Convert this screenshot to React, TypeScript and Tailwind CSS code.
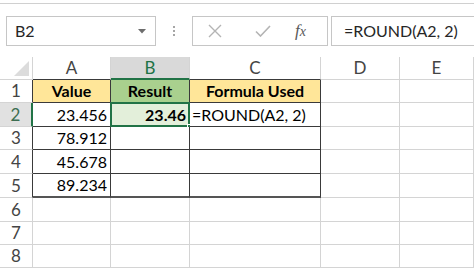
import React from "react";

const COLS = ["A", "B", "C", "D", "E"];
const ROW_H = [23, 23, 24, 23, 24, 24, 24, 23, 23];

type Cell = {
  text?: string;
  align?: "left" | "right" | "center";
  bold?: boolean;
  bg?: string;
  table?: boolean;
};

const data: Record<number, Cell[]> = {
  1: [
    { text: "Value", align: "center", bold: true, bg: "bg-[#ffe699]", table: true },
    { text: "Result", align: "center", bold: true, bg: "bg-[#a9d08e]", table: true },
    { text: "Formula Used", align: "center", bold: true, bg: "bg-[#ffe699]", table: true },
  ],
  2: [
    { text: "23.456", align: "right", table: true },
    { text: "23.46", align: "right", bold: true, bg: "bg-[#e3efda]", table: true },
    { text: "=ROUND(A2, 2)", align: "left", table: true },
  ],
  3: [{ text: "78.912", align: "right", table: true }, { table: true }, { table: true }],
  4: [{ text: "45.678", align: "right", table: true }, { table: true }, { table: true }],
  5: [{ text: "89.234", align: "right", table: true }, { table: true }, { table: true }],
};

function FormulaBar() {
  return (
    <div className="flex h-[30px] items-stretch mt-[12px] text-[#262626]">
      <div className="ml-[6px] flex w-[150px] items-center justify-between border border-[#c6c6c6] bg-white pl-[8px] pr-[9px]">
        <span className="text-[16px]">B2</span>
        <svg width="8" height="5" viewBox="0 0 8 5">
          <path d="M0 0 L8 0 L4 4.5 Z" fill="#6d6d6d" />
        </svg>
      </div>
      <div className="flex w-[36px] flex-col items-center justify-center gap-[2px]">
        <span className="h-[2px] w-[2px] bg-[#a6a6a6]" />
        <span className="h-[2px] w-[2px] bg-[#a6a6a6]" />
        <span className="h-[2px] w-[2px] bg-[#a6a6a6]" />
      </div>
      <div className="flex w-[136px] items-center border border-[#c6c6c6] bg-white">
        <svg className="ml-[15px]" width="14" height="14" viewBox="0 0 14 14">
          <path d="M1 1 L13 13 M13 1 L1 13" stroke="#b4b4b4" strokeWidth="1.4" fill="none" />
        </svg>
        <svg className="ml-[33px]" width="16" height="12" viewBox="0 0 16 12">
          <path d="M1 6.5 L5.5 11 L15 1" stroke="#b4b4b4" strokeWidth="1.6" fill="none" />
        </svg>
        <span className="ml-[24px] font-['Liberation_Serif',serif] text-[17px] italic text-[#595959]">
          f<span className="text-[14px]">x</span>
        </span>
      </div>
      <div className="ml-[3px] flex flex-1 items-center border border-r-0 border-[#c6c6c6] bg-white pl-[12px]">
        <span className="text-[16px]">=ROUND(A2, 2)</span>
      </div>
    </div>
  );
}

function Sheet() {
  return (
    <div
      className="mt-[11px] grid grid-cols-[33px_78px_79px_131px_79px_1fr]"
      style={{ gridTemplateRows: ROW_H.map((h) => `${h}px`).join(" ") }}
    >
      {/* corner */}
      <div className="relative border-r border-b border-[#d4d4d4] bg-white">
        <svg className="absolute right-[3px] bottom-[3px]" width="15" height="15" viewBox="0 0 15 15">
          <path d="M15 0 L15 15 L0 15 Z" fill="#dcdcdc" />
        </svg>
      </div>
      {COLS.map((c) => {
        const sel = c === "B";
        const tableTop = c === "A" || c === "B" || c === "C";
        return (
          <div
            key={c}
            className={`flex items-center justify-center text-[17px] border-r border-[#d4d4d4] ${
              sel
                ? "bg-[#d9d9d9] text-[#217346] border-b-2 border-b-[#217346]"
                : tableTop
                ? "bg-white text-[#444] border-b border-b-[#3a3a3a]"
                : "bg-white text-[#444] border-b"
            }`}
          >
            {c}
          </div>
        );
      })}
      {[1, 2, 3, 4, 5, 6, 7, 8].map((r) => {
        const row = data[r] || [];
        const active = r === 2;
        return (
          <React.Fragment key={r}>
            <div
              className={`flex items-center justify-center text-[17px] border-b border-[#d4d4d4] ${
                active
                  ? "bg-[#e1e1e1] text-[#3c6e52] border-r-2 border-r-[#217346]"
                  : r <= 5
                  ? "bg-white text-[#444] border-r border-r-[#3a3a3a]"
                  : "bg-white text-[#444] border-r"
              }`}
            >
              {r}
            </div>
            {COLS.map((c, ci) => {
              const cell = row[ci];
              const inTable = cell?.table;
              const isSel = r === 2 && c === "B";
              const borders = inTable
                ? `border-r border-b border-[#3a3a3a] ${r === 5 ? "border-b-2 border-b-[#555]" : ""}`
                : "border-r border-b border-[#d4d4d4]";
              const align =
                cell?.align === "right"
                  ? "justify-end pr-[3px]"
                  : cell?.align === "center"
                  ? "justify-center"
                  : "justify-start pl-[2px]";
              return (
                <div
                  key={c}
                  className={`relative flex items-center whitespace-nowrap text-[16px] text-black ${borders} ${align} ${
                    cell?.bg ?? "bg-white"
                  } ${cell?.bold ? "font-bold" : ""}`}
                >
                  {cell?.text}
                  {isSel && (
                    <>
                      <div className="pointer-events-none absolute -left-[1px] -top-[1px] -right-[1px] -bottom-[1px] border-2 border-[#217346]" />
                      <div className="absolute -right-[4px] -bottom-[4px] h-[6px] w-[6px] border border-white bg-[#217346]" />
                    </>
                  )}
                </div>
              );
            })}
          </React.Fragment>
        );
      })}
    </div>
  );
}

export default function App() {
  return (
    <div className="h-[268px] w-[474px] overflow-hidden bg-white font-['Lato',sans-serif]">
      <div className="h-[4px] border-b border-[#d0d0d0]" />
      <FormulaBar />
      <Sheet />
    </div>
  );
}
